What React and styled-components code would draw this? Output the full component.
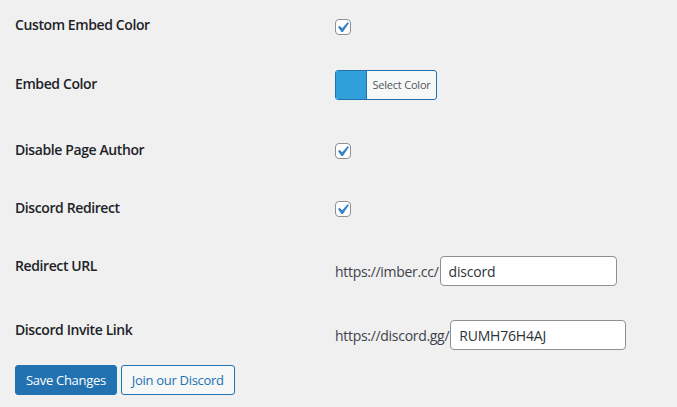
import styled, { createGlobalStyle } from 'styled-components';

const Global = createGlobalStyle`
  html, body { margin: 0; padding: 0; background: #f0f0f1; }
  body {
    font-family: "Open Sans", "Noto Sans", sans-serif;
    color: #1d2327;
    font-size: 13px;
  }
`;

const Page = styled.div`
  padding: 0 15px;
  width: 677px;
  height: 407px;
  box-sizing: border-box;
  overflow: hidden;
`;

const Row = styled.div`
  display: grid;
  grid-template-columns: 320px 1fr;
  height: ${p => p.h}px;
  box-sizing: border-box;
`;

const Label = styled.div`
  font-size: 14px;
  font-weight: 600;
  line-height: 18px;
  padding-top: 16px;
  letter-spacing: -0.4px;
`;

const Field = styled.div`
  padding-top: ${p => p.top}px;
  display: flex;
  align-items: center;
  height: 30px;
  align-self: start;
  box-sizing: content-box;
`;

const Box = styled.span`
  width: 16px;
  height: 16px;
  box-sizing: border-box;
  border: 1px solid #8c8f94;
  border-radius: 4px;
  background: #fff;
  display: inline-flex;
  overflow: visible;
  & svg { margin: -3px 0 0 -4px; flex: none; }
`;

const ColorButton = styled.div`
  display: flex;
  width: 102px;
  height: 30px;
  box-sizing: border-box;
  border: 1px solid #2271b1;
  border-radius: 3px;
  overflow: hidden;
  background: #f6f7f7;
`;

const Swatch = styled.span`
  width: 30px;
  flex: none;
  background: ${p => p.color};
`;

const ColorText = styled.span`
  flex: 1;
  font-size: 11px;
  line-height: 28px;
  color: #50575e;
  border-left: 1px solid #2271b1;
  text-align: center;
  white-space: nowrap;
  letter-spacing: -0.2px;
`;

const Prefix = styled.span`
  font-size: 14px;
  color: #3c434a;
  margin-right: 1px;
  letter-spacing: -0.3px;
`;

const Input = styled.input`
  height: 30px;
  width: ${p => p.w}px;
  box-sizing: border-box;
  border: 1px solid #8c8f94;
  border-radius: 4px;
  background: #fff;
  padding: 0 8px;
  font-family: inherit;
  font-size: 14px;
  color: #2c3338;
  outline: none;
  letter-spacing: -0.2px;
`;

const Actions = styled.div`
  display: flex;
  gap: 4px;
`;

const Button = styled.button`
  height: 30px;
  padding: 0 10px;
  border-radius: 3px;
  border: 1px solid #2271b1;
  font-family: inherit;
  font-size: 13px;
  letter-spacing: -0.3px;
  cursor: pointer;
  background: ${p => (p.primary ? '#2271b1' : '#f6f7f7')};
  color: ${p => (p.primary ? '#fff' : '#2271b1')};
`;

const Check = () => (
  <Box>
    <svg width="21" height="21" viewBox="0 0 20 20">
      <path fill="#3582c4" d="M14.83 4.89l1.34.94-5.81 8.38H9.02L5.78 9.67l1.34-1.25 2.57 2.4z" />
    </svg>
  </Box>
);

export default function App() {
  return (
    <Page>
      <Global />
      <Row h={59}>
        <Label>Custom Embed Color</Label>
        <Field top={12}><Check /></Field>
      </Row>
      <Row h={66}>
        <Label>Embed Color</Label>
        <Field top={11}>
          <ColorButton>
            <Swatch color="#2fa0da" />
            <ColorText>Select Color</ColorText>
          </ColorButton>
        </Field>
      </Row>
      <Row h={58}>
        <Label>Disable Page Author</Label>
        <Field top={11}><Check /></Field>
      </Row>
      <Row h={58}>
        <Label>Discord Redirect</Label>
        <Field top={11}><Check /></Field>
      </Row>
      <Row h={64}>
        <Label>Redirect URL</Label>
        <Field top={15}>
          <Prefix>https://imber.cc/</Prefix>
          <Input w={177} defaultValue="discord" />
        </Field>
      </Row>
      <Row h={60}>
        <Label>Discord Invite Link</Label>
        <Field top={15}>
          <Prefix>https://discord.gg/</Prefix>
          <Input w={176} defaultValue="RUMH76H4AJ" />
        </Field>
      </Row>
      <Actions>
        <Button primary>Save Changes</Button>
        <Button>Join our Discord</Button>
      </Actions>
    </Page>
  );
}
